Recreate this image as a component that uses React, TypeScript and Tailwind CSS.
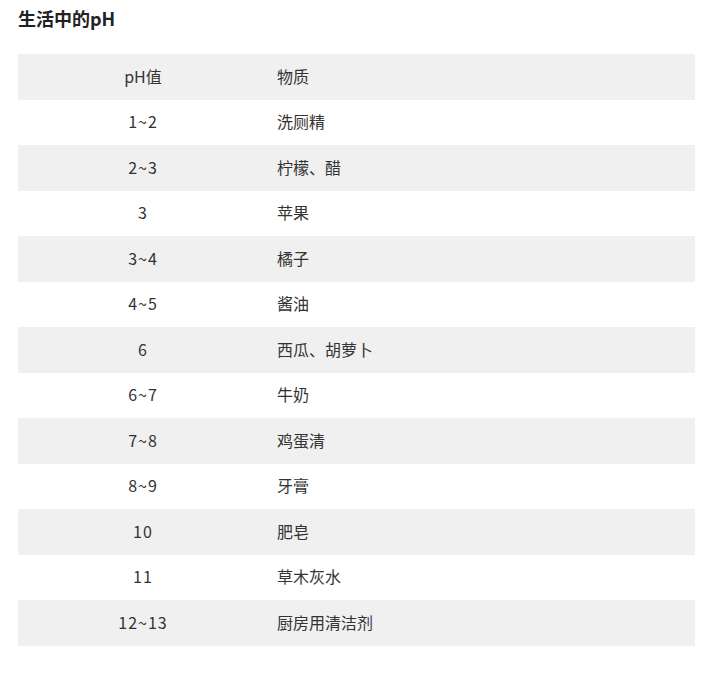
const rows: [string, string][] = [
  ["1~2", "洗厕精"],
  ["2~3", "柠檬、醋"],
  ["3", "苹果"],
  ["3~4", "橘子"],
  ["4~5", "酱油"],
  ["6", "西瓜、胡萝卜"],
  ["6~7", "牛奶"],
  ["7~8", "鸡蛋清"],
  ["8~9", "牙膏"],
  ["10", "肥皂"],
  ["11", "草木灰水"],
  ["12~13", "厨房用清洁剂"],
];

export default function App() {
  return (
    <div className="min-h-screen bg-white px-[18px] pt-[6px] text-[#333] font-['Noto_Sans_CJK_SC',sans-serif]">
      <h2 className="text-[18px] font-bold leading-[24px] text-[#222]">生活中的pH</h2>
      <table className="mt-[24px] w-[677px] border-collapse text-[16px]">
        <thead>
          <tr className="h-[45.5px] bg-[#f0f0f0]">
            <th className="w-[250px] pb-[2px] text-center font-normal">pH值</th>
            <th className="pl-[9px] pb-[2px] text-left font-normal">物质</th>
          </tr>
        </thead>
        <tbody>
          {rows.map(([ph, name], i) => (
            <tr key={ph} className={i % 2 === 1 ? "h-[45.5px] bg-[#f0f0f0]" : "h-[45.5px] bg-white"}>
              <td className="pb-[2px] text-center tracking-[1px]">{ph}</td>
              <td className="pl-[9px] pb-[2px]">{name}</td>
            </tr>
          ))}
        </tbody>
      </table>
    </div>
  );
}
